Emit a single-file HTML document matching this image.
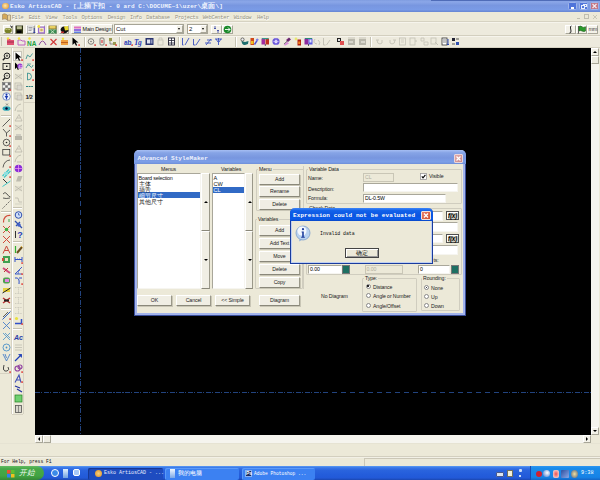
<!DOCTYPE html>
<html><head><meta charset="utf-8">
<style>
*{margin:0;padding:0;box-sizing:border-box}
html,body{width:600px;height:480px;overflow:hidden;background:#ECE9D8;font-family:"Liberation Sans",sans-serif;font-size:6px;color:#000}
.a{position:absolute}
svg.a{overflow:visible}
.mono{font-family:"Liberation Mono",monospace}
.tt{white-space:nowrap;line-height:1}
.btn{position:absolute;background:#F0EEE4;border-top:1px solid #fff;border-left:1px solid #fff;border-right:1px solid #9A9889;border-bottom:1px solid #8A887A;box-shadow:1px 1px 0 #C9C6B6;text-align:center;white-space:nowrap;line-height:8px;font-size:5.2px;letter-spacing:-0.1px;color:#222}
.fld{position:absolute;background:#fff;border-top:1px solid #A9A79A;border-left:1px solid #A9A79A;border-right:1px solid #F6F5F0;border-bottom:1px solid #F6F5F0;white-space:nowrap;font-size:5.2px;line-height:7px;padding-left:1px;letter-spacing:-0.1px}
.grp{position:absolute;border:1px solid #D0CDBF;border-radius:1px}
.glab{position:absolute;background:#ECE9D8;padding:0 1px;font-size:5.2px;letter-spacing:-0.1px;line-height:6px;white-space:nowrap;color:#222}
.lbl{position:absolute;font-size:5.2px;letter-spacing:-0.1px;line-height:6px;white-space:nowrap;color:#222}
.tb{position:absolute;background:#F3F1E8;border-top:1px solid #fff;border-left:1px solid #fff;border-right:1px solid #A8A698;border-bottom:1px solid #A8A698}
.sep{position:absolute;width:2px;border-left:1px solid #C5C2B2;border-right:1px solid #fff}
.hsep{position:absolute;height:2px;border-top:1px solid #C5C2B2;border-bottom:1px solid #fff}
.menu{position:absolute;top:15.5px;font-family:"Liberation Mono",monospace;font-size:5.4px;line-height:5px;letter-spacing:-0.3px;color:#959383;white-space:nowrap;text-shadow:0.5px 0.5px 0 #fff}
</style></head><body>

<div class="a" style="left:0;top:0;width:600px;height:12px;background:linear-gradient(#7F9CE0 0,#8BA7E8 15%,#7896E0 45%,#7A9BE6 80%,#6585D2 100%)"></div>
<div class="a" style="left:2px;top:2.5px;width:6.5px;height:6.5px;border-radius:45%;background:radial-gradient(circle at 45% 45%,#FFE8B0,#E8A848 70%,#C88830)"></div>
<div class="a tt mono" style="left:10px;top:3.7px;font-size:6px;font-weight:bold;color:#F0F4FE;letter-spacing:0.1px">Esko ArtiosCAD - [<span style="font-size:6.6px">上插下扣</span> - 0 ard C:\DOCUME~1\uzer\<span style="font-size:6.6px">桌面</span>\]</div>
<div class="a" style="left:568px;top:2px;width:9px;height:8px;border-radius:1.5px;background:#4F74DA;border:1px solid #9EB4EA"></div>
<div class="a" style="left:579px;top:2px;width:9px;height:8px;border-radius:1.5px;background:#5276DB;border:1px solid #9EB4EA"></div>
<div class="a" style="left:590px;top:2px;width:9px;height:8px;border-radius:1.5px;background:#C27584;border:1px solid #9EB4EA"></div>
<div class="a" style="left:570.5px;top:7px;width:3px;height:1.5px;background:#fff"></div>
<div class="a" style="left:582.5px;top:3.5px;width:4px;height:3px;border:1px solid #E8EEFC"></div><div class="a" style="left:581px;top:5px;width:4px;height:3.5px;border:1px solid #E8EEFC;background:#5276DB"></div>
<svg class="a" style="left:590px;top:2px" width="9" height="8"><path d="M2.5 2L6.5 6M6.5 2L2.5 6" stroke="#F4E8EC" stroke-width="1.2"/></svg>
<div class="a" style="left:431px;top:0;width:169px;height:1px;background:#4F6CB8"></div>
<div class="a" style="left:0;top:12px;width:600px;height:10px;background:#ECE9D8"></div>
<div class="a" style="left:0;top:21px;width:600px;height:1px;background:#D6D2C2"></div>
<svg class="a" style="left:2px;top:13px" width="10" height="9" viewBox="0 0 10 9"><path d="M0.5 1.5 Q2 0.2 3.5 1 L5.5 2 L5.5 7 L3.5 6 Q2 5.5 0.5 6.5 Z" fill="#D4A858" stroke="#8A7050" stroke-width=".5"/><path d="M5.5 2.5 Q7 1.5 8.5 2 L8.5 7.5 Q7 7 5.5 7.5 Z" fill="#ECD39C" stroke="#7A6A50" stroke-width=".5"/></svg>
<div class="menu" style="left:11.7px">File</div>
<div class="menu" style="left:28.7px">Edit</div>
<div class="menu" style="left:45.5px">View</div>
<div class="menu" style="left:62.5px">Tools</div>
<div class="menu" style="left:81.6px">Options</div>
<div class="menu" style="left:107.7px">Design</div>
<div class="menu" style="left:130px">Info</div>
<div class="menu" style="left:146.3px">Database</div>
<div class="menu" style="left:175px">Projects</div>
<div class="menu" style="left:202.7px">WebCenter</div>
<div class="menu" style="left:233.7px">Window</div>
<div class="menu" style="left:257px">Help</div>
<div class="a" style="left:577px;top:18px;width:3px;height:1px;background:#C0BEB0"></div>
<div class="a" style="left:584px;top:14px;width:5px;height:5px;border:1px solid #C0BEB0"></div>
<svg class="a" style="left:592px;top:14px" width="6" height="6"><path d="M1 1L5 5M5 1L1 5" stroke="#C0BEB0" stroke-width=".8"/></svg>
<div class="a" style="left:0;top:22px;width:600px;height:13px;background:#EDEADD"></div>
<div class="a" style="left:0;top:22px;width:600px;height:1px;background:#F6F4EC"></div>
<div class="a" style="left:0;top:34.5px;width:600px;height:1px;background:#D3CFBF"></div>
<div class="a" style="left:0;top:35.5px;width:600px;height:1px;background:#F6F4EC"></div>
<div class="a" style="left:0;top:36.5px;width:600px;height:10.5px;background:#EDEADD"></div>
<div class="a" style="left:0;top:47px;width:600px;height:1px;background:#D6D2C2"></div>
<div class="tb" style="left:3px;top:24.5px;width:10px;height:9px"></div>
<svg class="a" style="left:4px;top:25px" width="9" height="9" viewBox="0 0 9 9"><path d="M0.5 5 Q1 2.5 3.5 3 L7.5 3.5 Q8.5 7 6 8 L2 8 Q0.5 7.5 0.5 5z" fill="#7A8228"/><path d="M1.5 4.5 Q3 3.5 6 4.5" stroke="#C8C880" stroke-width="1" fill="none"/><path d="M6 0.8 L8.3 1.8 L7 3" stroke="#222" stroke-width=".8" fill="none"/></svg>
<div class="tb" style="left:14px;top:24.5px;width:9px;height:9px"></div>
<svg class="a" style="left:15px;top:25px" width="9" height="9" viewBox="0 0 9 9"><rect x="0.5" y="0.5" width="7.5" height="8" fill="#2E3212"/><rect x="1.8" y="1.2" width="5" height="3" fill="#B8BC90"/><rect x="2" y="5.5" width="4.5" height="2.5" fill="#000"/></svg>
<div class="tb" style="left:25.5px;top:24.5px;width:9px;height:9px"></div>
<svg class="a" style="left:26.5px;top:25px" width="9" height="9" viewBox="0 0 9 9"><rect x="0.5" y="1" width="6" height="7" fill="#F4F4F4" stroke="#9A9A9A" stroke-width=".5"/><path d="M1.5 2.5h4M1.5 4h4M1.5 5.5h3" stroke="#707070" stroke-width=".6"/><path d="M7.3 3v5M6.3 7l1 1 1-1" stroke="#2030A0" stroke-width=".8" fill="none"/></svg>
<div class="tb" style="left:36px;top:24.5px;width:9px;height:9px"></div>
<svg class="a" style="left:37px;top:25px" width="9" height="9" viewBox="0 0 9 9"><rect x="1" y="1.5" width="7" height="7" fill="#9868D0"/><rect x="2.2" y="2.7" width="4.6" height="4.6" fill="#F4ECC8"/><circle cx="4.5" cy="5" r="1.3" fill="#D0B060"/><circle cx="1.8" cy="1.5" r="1.4" fill="#F0E040"/></svg>
<div class="tb" style="left:47px;top:24.5px;width:10px;height:9px"></div>
<svg class="a" style="left:48px;top:25px" width="9" height="9" viewBox="0 0 9 9"><rect x="0.5" y="0.5" width="8" height="4" fill="#8A7A30"/><rect x="1.5" y="1" width="6" height="2.5" fill="#E8D060"/><rect x="0.5" y="4.5" width="8" height="4" fill="#3A8A50"/><path d="M2.5 5L6.5 8.5M6.5 5L2.5 8.5" stroke="#D8F0D0" stroke-width=".8"/></svg>
<div class="tb" style="left:59px;top:24.5px;width:10px;height:9px"></div>
<svg class="a" style="left:60px;top:25px" width="9" height="9" viewBox="0 0 9 9"><path d="M0.5 5 Q1 1.5 4 1.5 L8 2.5 L8.5 6 Q6 9 3 8.5 Z" fill="#111"/><path d="M4 1.5 L8 1 L8.5 5 L5 5.5 Z" fill="#E8D830"/><rect x="1" y="6.5" width="3" height="1.5" fill="#C03030"/></svg>
<div class="tb" style="left:71px;top:24px;width:42px;height:10px"></div>
<svg class="a" style="left:72.5px;top:25px" width="9" height="9" viewBox="0 0 9 9"><rect x="1" y="1.5" width="7" height="2" fill="#E070C0"/><rect x="1" y="4" width="7" height="2" fill="#9070E0"/><rect x="1" y="6.5" width="7" height="1.5" fill="#6080E0"/></svg>
<div class="a tt" style="left:82.5px;top:26.5px;font-size:5.4px;letter-spacing:-0.1px;color:#111">Main Design</div>
<div class="a" style="left:114px;top:24px;width:70px;height:9.5px;background:#fff;border:1px solid #A6A496"></div>
<div class="a tt" style="left:116px;top:26px;font-size:6px;color:#111">Cut</div>
<div class="tb" style="left:176px;top:25px;width:7px;height:7.5px"></div>
<div class="a" style="left:178px;top:28px;border-left:1.5px solid transparent;border-right:1.5px solid transparent;border-top:2px solid #000"></div>
<div class="a" style="left:187px;top:24px;width:21px;height:9.5px;background:#fff;border:1px solid #A6A496"></div>
<div class="a tt" style="left:189px;top:26px;font-size:6px;color:#111">2</div>
<div class="tb" style="left:200px;top:25px;width:7px;height:7.5px"></div>
<div class="a" style="left:202px;top:28px;border-left:1.5px solid transparent;border-right:1.5px solid transparent;border-top:2px solid #000"></div>
<div class="tb" style="left:211px;top:24.5px;width:11px;height:9px"></div>
<svg class="a" style="left:212px;top:25px" width="9" height="9" viewBox="0 0 9 9"><path d="M3 1v3M2 3l1 1 1-1M6 8V5M5 6l1-1 1 1" stroke="#3040A0" stroke-width=".8" fill="none"/></svg>
<div class="tb" style="left:222px;top:24.5px;width:11px;height:9px"></div>
<svg class="a" style="left:223px;top:25px" width="9" height="9" viewBox="0 0 9 9"><circle cx="4.5" cy="4.5" r="3.8" fill="#1A8A2A"/><path d="M2 4.5h5M5 2.5l2 2-2 2" stroke="#fff" stroke-width=".9" fill="none"/></svg>
<div class="tb" style="left:565px;top:24.5px;width:11px;height:9px"></div>
<svg class="a" style="left:566px;top:25px" width="9" height="9" viewBox="0 0 9 9"><path d="M5.5 1 Q4 1 4.5 3 L5 6 Q5.2 8 3.5 8" stroke="#111" stroke-width=".9" fill="none"/></svg>
<div class="tb" style="left:576px;top:24.5px;width:11px;height:9px"></div>
<svg class="a" style="left:577px;top:25px" width="9" height="9" viewBox="0 0 9 9"><path d="M1.5 1v7.5" stroke="#222" stroke-width=".7"/><path d="M2 1.5 Q4 0.5 5 1.8 T8.5 1.8 V6 Q7 7 5 6 T2 6z" fill="#2A9A2A" stroke="#0A4A0A" stroke-width=".5"/></svg>
<div class="tb" style="left:587px;top:24.5px;width:11px;height:9px"></div>
<div class="a tt" style="left:588.5px;top:26.5px;font-size:5.5px;color:#444;letter-spacing:-0.3px">mm</div>
<div class="a" style="left:1px;top:37px;width:1px;height:9px;background:#C5C2B2"></div>
<svg class="a" style="left:6px;top:37px" width="9" height="9" viewBox="0 0 9 9"><path d="M1 2h3l1 1h3v5H1z" fill="#E05070"/><path d="M1 5h7" stroke="#A03050" stroke-width="1"/><circle cx="2" cy="1.5" r="1.2" fill="#F0E040"/></svg>
<svg class="a" style="left:17px;top:37px" width="9" height="9" viewBox="0 0 9 9"><path d="M1 3h3l1 1h3v4H1z" fill="none" stroke="#C060C0" stroke-width="1"/><circle cx="2" cy="1.5" r="1.2" fill="#F0E040"/></svg>
<svg class="a" style="left:27px;top:37px" width="9" height="9" viewBox="0 0 9 9"><text x="0" y="8.5" font-size="6.5" font-weight="bold" fill="#20A040" font-family="Liberation Sans">NA</text><circle cx="2.5" cy="1.5" r="1.2" fill="#F0E040"/></svg>
<svg class="a" style="left:38px;top:37px" width="9" height="9" viewBox="0 0 9 9"><path d="M1 8 Q4.5 0 8 8" stroke="#9050A0" stroke-width="1" fill="none"/><circle cx="4.5" cy="2" r="1.2" fill="#F0E040"/></svg>
<svg class="a" style="left:49px;top:37px" width="9" height="9" viewBox="0 0 9 9"><path d="M1.5 2L7.5 8M7.5 2L1.5 8" stroke="#D03A3A" stroke-width="1.2"/></svg>
<svg class="a" style="left:60px;top:37px" width="9" height="9" viewBox="0 0 9 9"><rect x="1" y="3" width="7" height="5" fill="#F0A040"/><rect x="1" y="5" width="7" height="1" fill="#C06020"/><circle cx="3" cy="1.8" r="1.2" fill="#F0E040"/></svg>
<svg class="a" style="left:70.5px;top:37px" width="9" height="9" viewBox="0 0 9 9"><path d="M1.5 0.5 L1.5 8 L3.5 6 L5 8.8 L6.2 8.2 L4.8 5.5 L7.5 5.5 Z" fill="#000"/><rect x="7.3" y="7.3" width="1.6" height="1.6" fill="#E0403A"/></svg>
<svg class="a" style="left:86.5px;top:37px" width="9" height="9" viewBox="0 0 9 9"><circle cx="4" cy="4.5" r="2.8" fill="none" stroke="#555" stroke-width=".7"/><circle cx="4" cy="4.5" r=".7" fill="#555"/><rect x="7.3" y="7.3" width="1.6" height="1.6" fill="#E0403A"/></svg>
<svg class="a" style="left:97.5px;top:37px" width="9" height="9" viewBox="0 0 9 9"><rect x="2" y="1" width="4" height="7" rx="1" fill="none" stroke="#666" stroke-width=".8"/><rect x="3" y="3" width="2" height="3" fill="#E08080"/><rect x="7.3" y="7.3" width="1.6" height="1.6" fill="#E0403A"/></svg>
<svg class="a" style="left:108px;top:37px" width="9" height="9" viewBox="0 0 9 9"><path d="M1 1h3v3H1zM5 5h3v3H5z" fill="#9A9A50"/><path d="M2 4v3h3" stroke="#666" stroke-width=".7" fill="none"/><rect x="7.3" y="7.3" width="1.6" height="1.6" fill="#E0403A"/></svg>
<svg class="a" style="left:124px;top:37px" width="9" height="9" viewBox="0 0 9 9"><text x="0" y="7.5" font-size="6.5" font-weight="bold" fill="#2A40B8" font-family="Liberation Sans">ab</text><rect x="7.3" y="7.3" width="1.6" height="1.6" fill="#E0403A"/></svg>
<svg class="a" style="left:134px;top:37px" width="9" height="9" viewBox="0 0 9 9"><text x="0" y="7.5" font-size="7.5" font-weight="bold" font-style="italic" fill="#2A40B8" font-family="Liberation Serif" letter-spacing="-0.5">Tg</text></svg>
<svg class="a" style="left:145px;top:37px" width="9" height="9" viewBox="0 0 9 9"><rect x="0.5" y="1" width="8" height="7" fill="#2A3470"/><rect x="2" y="2.5" width="3" height="4" fill="#E0E4F0"/><rect x="5.5" y="2.5" width="2" height="4" fill="#9098C0"/></svg>
<svg class="a" style="left:156px;top:37px" width="9" height="9" viewBox="0 0 9 9"><rect x="2" y="3" width="5" height="5" fill="none" stroke="#C4C2B6" stroke-width=".8"/><path d="M3 3V1h3v2" stroke="#C4C2B6" stroke-width=".7" fill="none"/></svg>
<svg class="a" style="left:167px;top:37px" width="9" height="9" viewBox="0 0 9 9"><rect x="1.5" y="1" width="6" height="7" fill="#fff" stroke="#223" stroke-width=".9"/><path d="M1.5 3.5h6M1.5 6h6M4.5 1v7" stroke="#223" stroke-width=".8"/></svg>
<svg class="a" style="left:181px;top:37px" width="9" height="9" viewBox="0 0 9 9"><path d="M1.5 1v7h1M4 8L8 1" stroke="#3A50C0" stroke-width=".9" fill="none"/></svg>
<svg class="a" style="left:192px;top:37px" width="9" height="9" viewBox="0 0 9 9"><path d="M1.5 2v6h2M4 8L8 2" stroke="#3A50C0" stroke-width=".9" fill="none"/></svg>
<svg class="a" style="left:204px;top:37px" width="9" height="9" viewBox="0 0 9 9"><path d="M1 6h6M3 3h5M2 8l5-6" stroke="#3A50C0" stroke-width=".9" fill="none"/></svg>
<svg class="a" style="left:214px;top:37px" width="9" height="9" viewBox="0 0 9 9"><path d="M1 2h7M4.5 1v7M2 2l2 3M7 2l-2 3" stroke="#3A50C0" stroke-width=".9" fill="none"/></svg>
<svg class="a" style="left:240px;top:37px" width="9" height="9" viewBox="0 0 9 9"><path d="M1.5 4 Q2 8.5 5 8 L8 7 L8.5 4 L5 5 Z" fill="#1D6E6E"/><circle cx="2.5" cy="2.5" r="1.6" fill="#F0F0F0" stroke="#222" stroke-width=".6"/></svg>
<svg class="a" style="left:250px;top:37px" width="9" height="9" viewBox="0 0 9 9"><rect x="0.5" y="1" width="3.5" height="7" fill="#D04818"/><rect x="1" y="4" width="2.5" height="3" fill="#F0C020"/><path d="M4.5 7.5 L8 2" stroke="#5050D0" stroke-width="1.4"/><circle cx="7" cy="3" r="1.2" fill="#8080E8"/></svg>
<svg class="a" style="left:261px;top:37px" width="9" height="9" viewBox="0 0 9 9"><rect x="0.5" y="1.5" width="3.5" height="6" fill="#A02CA0"/><rect x="4.5" y="1.5" width="3.5" height="6" fill="#C03020"/><rect x="1" y="1" width="6.5" height="1.2" fill="#3A9A8A"/><path d="M4.3 7v2" stroke="#334" stroke-width=".8"/></svg>
<svg class="a" style="left:272px;top:37px" width="9" height="9" viewBox="0 0 9 9"><circle cx="4" cy="4.5" r="3.6" fill="#6A58D8"/><circle cx="4" cy="4.5" r="1.6" fill="#F4F0FF"/><path d="M0.5 4.5h7M4 1v7" stroke="#C8B8F8" stroke-width=".5"/></svg>
<svg class="a" style="left:283px;top:37px" width="9" height="9" viewBox="0 0 9 9"><path d="M0.5 8 L4 4.5 L6 6.5 L2.5 8.5z" fill="#D890D8"/><path d="M3 3 L6 0.5 L8 2.5 L5 5z" fill="#7A2880"/><path d="M1 7 L7 1.5" stroke="#333" stroke-width=".6"/></svg>
<svg class="a" style="left:293.5px;top:37px" width="9" height="9" viewBox="0 0 9 9"><circle cx="2" cy="2" r="1.4" fill="#E8E870"/><rect x="3.5" y="2.5" width="3.5" height="6" fill="#B02010"/><rect x="4.2" y="4.5" width="2" height="2.5" fill="#F08020"/></svg>
<svg class="a" style="left:304px;top:37px" width="9" height="9" viewBox="0 0 9 9"><rect x="0.5" y="1.5" width="4" height="6" fill="#8A2AA0"/><rect x="4.5" y="1.5" width="4" height="6" fill="#5A5AE0"/><rect x="5.5" y="2.5" width="2" height="3" fill="#E0E0FF"/><rect x="1" y="1" width="7" height="1" fill="#2A8A7A"/><path d="M4.5 7v2" stroke="#334" stroke-width=".8"/></svg>
<svg class="a" style="left:313px;top:37px" width="9" height="9" viewBox="0 0 9 9"><path d="M2 2 Q-1 6 4 7 M5 3 Q8 5 6 8" stroke="#BFBDB1" stroke-width=".9" fill="none"/></svg>
<svg class="a" style="left:322px;top:37px" width="9" height="9" viewBox="0 0 9 9"><path d="M1.5 1v7h2M4.5 8L8 3" stroke="#BFBDB1" stroke-width=".9" fill="none"/></svg>
<svg class="a" style="left:336px;top:37px" width="9" height="9" viewBox="0 0 9 9"><rect x="1" y="1" width="4" height="4" fill="#222"/><rect x="4" y="4" width="4" height="4" fill="#E05050"/><rect x="2" y="2" width="2" height="2" fill="#ddd"/></svg>
<svg class="a" style="left:347px;top:37px" width="9" height="9" viewBox="0 0 9 9"><rect x="1" y="2" width="7" height="6" fill="#B8B6AA"/><path d="M1 1h7" stroke="#C8C6BA" stroke-width="1"/><rect x="2" y="4" width="4" height="2" fill="#D8D6CC"/></svg>
<svg class="a" style="left:358px;top:37px" width="9" height="9" viewBox="0 0 9 9"><rect x="1" y="2" width="7" height="6" fill="#B8B6AA"/><path d="M1 1h7" stroke="#C8C6BA" stroke-width="1"/><rect x="3" y="4" width="4" height="2" fill="#D8D6CC"/></svg>
<svg class="a" style="left:375px;top:37px" width="9" height="9" viewBox="0 0 9 9"><path d="M2 3 Q2 7 5 7 Q8 7 7 3 M1 3h3" stroke="#C4C2B6" stroke-width=".9" fill="none"/></svg>
<svg class="a" style="left:388px;top:37px" width="9" height="9" viewBox="0 0 9 9"><path d="M7 3 Q7 7 4 7 Q1 7 2 3 M5 3h3" stroke="#C4C2B6" stroke-width=".9" fill="none"/></svg>
<svg class="a" style="left:398px;top:37px" width="9" height="9" viewBox="0 0 9 9"><rect x="1.5" y="1" width="6" height="7" fill="none" stroke="#C4C2B6" stroke-width=".8"/><path d="M3 3h3M3 5h3" stroke="#C4C2B6" stroke-width=".7"/></svg>
<svg class="a" style="left:409px;top:37px" width="9" height="9" viewBox="0 0 9 9"><rect x="1" y="1" width="5" height="7" fill="none" stroke="#C4C2B6" stroke-width=".8"/><path d="M6 4h2" stroke="#C4C2B6" stroke-width="1"/></svg>
<svg class="a" style="left:420px;top:37px" width="9" height="9" viewBox="0 0 9 9"><path d="M1 1h3v3H1zM4 5h4v3H4z" fill="none" stroke="#C4C2B6" stroke-width=".8"/></svg>
<svg class="a" style="left:430px;top:37px" width="9" height="9" viewBox="0 0 9 9"><rect x="1" y="1" width="5" height="6" fill="none" stroke="#C4C2B6" stroke-width=".8"/><path d="M5 5l3 3" stroke="#C4C2B6" stroke-width="1"/></svg>
<svg class="a" style="left:441px;top:37px" width="9" height="9" viewBox="0 0 9 9"><rect x="1" y="1" width="5" height="7" fill="#fff" stroke="#333" stroke-width=".8"/><path d="M2 3h3M2 5h3" stroke="#333" stroke-width=".6"/><path d="M7 2v6M6 7l1 1 1-1" stroke="#2040B0" stroke-width=".9" fill="none"/></svg>
<svg class="a" style="left:451px;top:37px" width="9" height="9" viewBox="0 0 9 9"><path d="M1 1h3v3H1z" fill="#223"/><path d="M5 5h3v3H5z" fill="#3050B0"/><path d="M5 2l3 0M1 7h3" stroke="#333" stroke-width=".8"/></svg>
<div class="sep" style="left:84px;top:36.5px;height:10px"></div>
<div class="sep" style="left:118.5px;top:36.5px;height:10px"></div>
<div class="sep" style="left:177.5px;top:36.5px;height:10px"></div>
<div class="sep" style="left:234.5px;top:36.5px;height:10px"></div>
<div class="sep" style="left:370px;top:36.5px;height:10px"></div>
<svg class="a" style="left:1.5px;top:51.5px" width="9" height="9" viewBox="0 0 9 9"><circle cx="5" cy="3.8" r="2.8" fill="none" stroke="#222" stroke-width="1"/><path d="M3 6 L0.8 8.2" stroke="#222" stroke-width="1.4"/><path d="M3.8 3.8h2.4M5 2.6v2.4" stroke="#222" stroke-width=".7"/></svg>
<svg class="a" style="left:1.5px;top:62.0px" width="9" height="9" viewBox="0 0 9 9"><rect x="1" y="1.5" width="7" height="6" fill="none" stroke="#222" stroke-width=".9"/><rect x="4" y="3.5" width="1.5" height="1.5" fill="#222"/></svg>
<svg class="a" style="left:1.5px;top:72.0px" width="9" height="9" viewBox="0 0 9 9"><circle cx="5" cy="3.8" r="2.8" fill="none" stroke="#222" stroke-width="1"/><path d="M3 6 L0.8 8.2" stroke="#222" stroke-width="1.4"/><path d="M3.8 3.8h2.4" stroke="#222" stroke-width=".7"/></svg>
<svg class="a" style="left:1.5px;top:82.0px" width="9" height="9" viewBox="0 0 9 9"><rect x="0.5" y="0.5" width="8" height="8" fill="#F4F4F0" stroke="#666" stroke-width=".5"/><path d="M0.5 0.5h2.7v2.7h-2.7zM5.8 0.5h2.7v2.7h-2.7zM3.2 3.2h2.6v2.6h-2.6zM0.5 5.8h2.7v2.7h-2.7zM5.8 5.8h2.7v2.7h-2.7z" fill="#707070"/><rect x="7.3" y="7.3" width="1.6" height="1.6" fill="#E0403A"/></svg>
<svg class="a" style="left:1.5px;top:92.0px" width="9" height="9" viewBox="0 0 9 9"><circle cx="4.5" cy="4.5" r="3.8" fill="#F0F4FC" stroke="#5070B8" stroke-width=".7"/><circle cx="4.5" cy="2.6" r="1" fill="#1838B0"/><path d="M4.5 3.5v4M3 5l1.5-1 1.5 1" stroke="#1838B0" stroke-width="1.1" fill="none"/></svg>
<svg class="a" style="left:1.5px;top:102.5px" width="9" height="9" viewBox="0 0 9 9"><ellipse cx="4.5" cy="5.5" rx="4" ry="2.3" fill="#30A8B8"/><circle cx="4.5" cy="5.5" r="1.2" fill="#003"/><path d="M4 0.5l2 2M6 0.5l-2 2" stroke="#555" stroke-width=".6"/></svg>
<svg class="a" style="left:1.5px;top:118.0px" width="9" height="9" viewBox="0 0 9 9"><path d="M0.5 8.5 L8 1" stroke="#222" stroke-width=".7"/><rect x="7.3" y="7.3" width="1.6" height="1.6" fill="#E0403A"/></svg>
<svg class="a" style="left:1.5px;top:128.0px" width="9" height="9" viewBox="0 0 9 9"><path d="M1 1 L4.5 5 L8 2 M4.5 5 L4.5 8.5" stroke="#222" stroke-width=".7" fill="none"/><rect x="7.3" y="7.3" width="1.6" height="1.6" fill="#E0403A"/></svg>
<svg class="a" style="left:1.5px;top:138.0px" width="9" height="9" viewBox="0 0 9 9"><circle cx="4.5" cy="4.5" r="3.3" fill="none" stroke="#222" stroke-width=".7"/><circle cx="4.5" cy="4.5" r=".8" fill="#222"/><rect x="7.3" y="7.3" width="1.6" height="1.6" fill="#E0403A"/></svg>
<svg class="a" style="left:1.5px;top:148.0px" width="9" height="9" viewBox="0 0 9 9"><rect x="0.8" y="1.5" width="7" height="5.5" fill="none" stroke="#222" stroke-width=".7"/><rect x="7.3" y="7.3" width="1.6" height="1.6" fill="#E0403A"/></svg>
<svg class="a" style="left:1.5px;top:158.5px" width="9" height="9" viewBox="0 0 9 9"><path d="M1 8.5 Q2 1.5 8 1" stroke="#222" stroke-width=".7" fill="none"/><rect x="7.3" y="7.3" width="1.6" height="1.6" fill="#E0403A"/></svg>
<svg class="a" style="left:1.5px;top:168.5px" width="9" height="9" viewBox="0 0 9 9"><path d="M0.5 7 L7 0.5 M2 8.5 L8.5 2" stroke="#40C8C8" stroke-width="1.2"/><rect x="2" y="3" width="4" height="3" fill="#90E0E0"/><rect x="7.3" y="7.3" width="1.6" height="1.6" fill="#E0403A"/></svg>
<svg class="a" style="left:1.5px;top:178.0px" width="9" height="9" viewBox="0 0 9 9"><path d="M0.5 8.5 L8.5 3" stroke="#40C8C8" stroke-width="1"/><path d="M1 1 L5 5" stroke="#222" stroke-width=".9"/></svg>
<svg class="a" style="left:1.5px;top:190.5px" width="9" height="9" viewBox="0 0 9 9"><path d="M1 3 Q3 0 5 3 T8.5 6 M1 7 Q4 8 8 7" stroke="#222" stroke-width=".7" fill="none"/></svg>
<svg class="a" style="left:1.5px;top:199.5px" width="9" height="9" viewBox="0 0 9 9"><path d="M0.5 8.5 L8.5 0.5" stroke="#222" stroke-width=".65" stroke-dasharray="1.5 1"/></svg>
<svg class="a" style="left:1.5px;top:214.0px" width="9" height="9" viewBox="0 0 9 9"><path d="M1.5 8.5 Q1.5 1 8.5 1.5" stroke="#D04A3A" stroke-width="1.2" fill="none"/><path d="M7 5v3" stroke="#30A040" stroke-width=".9"/></svg>
<svg class="a" style="left:1.5px;top:224.5px" width="9" height="9" viewBox="0 0 9 9"><path d="M1 1 L8 8 M8 1 L1 8" stroke="#D04A3A" stroke-width="1"/><circle cx="4.5" cy="4.5" r="1.8" fill="#40B040"/></svg>
<svg class="a" style="left:1.5px;top:234.5px" width="9" height="9" viewBox="0 0 9 9"><path d="M1 1 L8 8 M8 1 L1 8" stroke="#D04A3A" stroke-width="1"/></svg>
<svg class="a" style="left:1.5px;top:244.5px" width="9" height="9" viewBox="0 0 9 9"><path d="M1 8.5 L4.5 1 L8 8.5 M2.5 5.5h4" stroke="#C8483A" stroke-width="1" fill="none"/></svg>
<svg class="a" style="left:1.5px;top:255.0px" width="9" height="9" viewBox="0 0 9 9"><rect x="1" y="1" width="7" height="7" fill="#40A050"/><rect x="3" y="3" width="3" height="3" fill="#F0E0C0"/><rect x="0" y="3" width="2" height="3" fill="#D04A3A"/></svg>
<svg class="a" style="left:1.5px;top:266.0px" width="9" height="9" viewBox="0 0 9 9"><path d="M1 2 L8 7" stroke="#D04A7A" stroke-width="2"/><path d="M2 6 L6 2" stroke="#C03030" stroke-width="1"/></svg>
<svg class="a" style="left:1.5px;top:276.0px" width="9" height="9" viewBox="0 0 9 9"><rect x="1" y="1.5" width="7" height="6" rx="2" fill="#50A050"/><rect x="3" y="3" width="4" height="3" fill="#E080E0"/></svg>
<svg class="a" style="left:1.5px;top:286.0px" width="9" height="9" viewBox="0 0 9 9"><rect x="1" y="2" width="7" height="4" fill="#E8D040"/><path d="M0.5 7 L8.5 2" stroke="#222" stroke-width="1"/></svg>
<svg class="a" style="left:1.5px;top:296.0px" width="9" height="9" viewBox="0 0 9 9"><path d="M1 2 L8 7 M8 2 L1 7" stroke="#C03030" stroke-width="1.5"/><rect x="2" y="3.5" width="5" height="2" fill="#222"/></svg>
<svg class="a" style="left:1.5px;top:311.0px" width="9" height="9" viewBox="0 0 9 9"><path d="M0.5 8.5 L8.5 0.5" stroke="#3060C0" stroke-width="1"/><path d="M1 6 L6 1" stroke="#222" stroke-width=".7"/><rect x="7.3" y="7.3" width="1.6" height="1.6" fill="#E0403A"/></svg>
<svg class="a" style="left:1.5px;top:321.0px" width="9" height="9" viewBox="0 0 9 9"><path d="M1 1 L8 8 M8 1 L1 8" stroke="#4A80C8" stroke-width=".9"/></svg>
<svg class="a" style="left:1.5px;top:332.0px" width="9" height="9" viewBox="0 0 9 9"><path d="M1 1 L8 8 M8 1 L1 8 M3 1 L8 6" stroke="#4A90C8" stroke-width=".8"/></svg>
<svg class="a" style="left:1.5px;top:342.5px" width="9" height="9" viewBox="0 0 9 9"><circle cx="4.5" cy="4.5" r="3.5" fill="none" stroke="#4A90C8" stroke-width=".9"/><circle cx="4.5" cy="4.5" r=".9" fill="#4A90C8"/></svg>
<svg class="a" style="left:1.5px;top:353.0px" width="9" height="9" viewBox="0 0 9 9"><path d="M1 1 L4.5 8 L8 1 M3 1 L4.5 5" stroke="#4A80C8" stroke-width=".9" fill="none"/></svg>
<svg class="a" style="left:1.5px;top:363.5px" width="9" height="9" viewBox="0 0 9 9"><path d="M2 1 Q0 8 5 7 Q8 6 6 3" stroke="#333" stroke-width=".9" fill="none"/><rect x="7.3" y="7.3" width="1.6" height="1.6" fill="#E0403A"/></svg>
<div class="hsep" style="left:1px;top:114.5px;width:10px"></div>
<div class="hsep" style="left:1px;top:210.5px;width:10px"></div>
<div class="hsep" style="left:1px;top:307.5px;width:10px"></div>
<div class="a" style="left:0;top:373px;width:11px;height:1px;background:#D6D2C2"></div>
<div class="a" style="left:11px;top:48px;width:1px;height:366px;background:#D6D2C2"></div>
<div class="a" style="left:12px;top:48px;width:1px;height:366px;background:#fff"></div>
<div class="a" style="left:13px;top:51px;width:9px;height:10px;background:#FBFAF6;border:1px solid #C8C6BA"></div>
<svg class="a" style="left:13.5px;top:51.5px" width="9" height="9" viewBox="0 0 9 9"><path d="M1.5 0.5 L1.5 8 L3.5 6 L5 8.8 L6.2 8.2 L4.8 5.5 L7.5 5.5 Z" fill="#000"/><rect x="7.3" y="7.3" width="1.6" height="1.6" fill="#E0403A"/></svg>
<svg class="a" style="left:13.5px;top:62.0px" width="9" height="9" viewBox="0 0 9 9"><path d="M1 0.5 L1 7 L2.8 5.5 L3.8 8 L4.8 7.5 L3.8 5 L5.8 5 Z" fill="#000"/><circle cx="6" cy="4" r="2.6" fill="#9A3AD0"/><text x="4.2" y="6" font-size="4" fill="#fff" font-family="Liberation Sans">42</text></svg>
<svg class="a" style="left:13.5px;top:72.0px" width="9" height="9" viewBox="0 0 9 9"><path d="M1 2 L8 7 M1 7 L8 2" stroke="#B4B2A6" stroke-width=".8"/><rect x="2" y="3" width="5" height="3" fill="none" stroke="#C8C6BA" stroke-width=".6"/></svg>
<svg class="a" style="left:13.5px;top:82.0px" width="9" height="9" viewBox="0 0 9 9"><rect x="1" y="1" width="6" height="6" fill="none" stroke="#B4B2A6" stroke-width=".7"/><rect x="3" y="3" width="5" height="5" fill="#DAD8CE" stroke="#B4B2A6" stroke-width=".7"/></svg>
<svg class="a" style="left:13.5px;top:92.0px" width="9" height="9" viewBox="0 0 9 9"><rect x="1" y="1" width="6" height="6" fill="none" stroke="#B4B2A6" stroke-width=".7"/><rect x="3" y="3" width="5" height="5" fill="#DAD8CE" stroke="#B4B2A6" stroke-width=".7"/></svg>
<svg class="a" style="left:13.5px;top:102.5px" width="9" height="9" viewBox="0 0 9 9"><path d="M1 8 Q2 2 7 1 M3 8h5" stroke="#B4B2A6" stroke-width=".8" fill="none"/></svg>
<svg class="a" style="left:13.5px;top:113.0px" width="9" height="9" viewBox="0 0 9 9"><path d="M1 8 L5 1.5 L8 8 Z M3 5h3" stroke="#B4B2A6" stroke-width=".7" fill="none"/></svg>
<svg class="a" style="left:13.5px;top:122.5px" width="9" height="9" viewBox="0 0 9 9"><path d="M1 2 L8 7 M1 7 L8 2" stroke="#B4B2A6" stroke-width=".8"/><rect x="2" y="3" width="5" height="3" fill="none" stroke="#C8C6BA" stroke-width=".6"/></svg>
<svg class="a" style="left:13.5px;top:133.0px" width="9" height="9" viewBox="0 0 9 9"><rect x="1" y="3" width="7" height="4" fill="#B8B6AA"/><rect x="2" y="1" width="5" height="2" fill="#CFCDC2"/></svg>
<svg class="a" style="left:13.5px;top:143.5px" width="9" height="9" viewBox="0 0 9 9"><path d="M1 8 L5 1.5 L8 8 Z M3 5h3" stroke="#B4B2A6" stroke-width=".7" fill="none"/></svg>
<svg class="a" style="left:13.5px;top:153.5px" width="9" height="9" viewBox="0 0 9 9"><path d="M1 8 Q2 2 7 1 M3 8h5" stroke="#B4B2A6" stroke-width=".8" fill="none"/></svg>
<svg class="a" style="left:13.5px;top:164.0px" width="9" height="9" viewBox="0 0 9 9"><circle cx="4.5" cy="4.5" r="3.8" fill="#8A2BD8"/><path d="M1 4.5h7M4.5 1v7" stroke="#F0A0F0" stroke-width=".7"/></svg>
<svg class="a" style="left:13.5px;top:174.0px" width="9" height="9" viewBox="0 0 9 9"><path d="M2 7.5 L4 2 L8.5 2 L6.5 7.5 Z" fill="#BDBBAF"/></svg>
<svg class="a" style="left:13.5px;top:184.0px" width="9" height="9" viewBox="0 0 9 9"><path d="M1 2 L8 7 M1 7 L8 2" stroke="#B4B2A6" stroke-width=".8"/><rect x="2" y="3" width="5" height="3" fill="none" stroke="#C8C6BA" stroke-width=".6"/></svg>
<svg class="a" style="left:13.5px;top:195.5px" width="9" height="9" viewBox="0 0 9 9"><path d="M1 2 L4 2 L5 6 L8 6" stroke="#B4B2A6" stroke-width=".7" fill="none"/><path d="M1 8h7" stroke="#C8C6BA" stroke-width=".6"/></svg>
<svg class="a" style="left:13.5px;top:209.5px" width="9" height="9" viewBox="0 0 9 9"><circle cx="4.5" cy="5" r="3.3" fill="#D0E0F8" stroke="#3050B0" stroke-width="1"/><path d="M4.5 3v2h1.5" stroke="#3050B0" stroke-width=".7" fill="none"/></svg>
<svg class="a" style="left:13.5px;top:219.5px" width="9" height="9" viewBox="0 0 9 9"><path d="M1 1 L8 8 M2 6 L6 2" stroke="#3050B0" stroke-width="1.3"/><circle cx="5" cy="5" r="1.8" fill="#4060C8"/></svg>
<svg class="a" style="left:13.5px;top:229.5px" width="9" height="9" viewBox="0 0 9 9"><path d="M1.5 1v7" stroke="#333" stroke-width="1"/><text x="3.2" y="8" font-size="9" font-weight="bold" fill="#2A40B8" font-family="Liberation Sans">?</text></svg>
<svg class="a" style="left:13.5px;top:244.5px" width="9" height="9" viewBox="0 0 9 9"><path d="M1.5 1v7" stroke="#30B030" stroke-width="1.2"/><path d="M3 8 L8 2" stroke="#6A5020" stroke-width="2"/><path d="M7 1 L8.5 2.5" stroke="#E0B040" stroke-width="1"/></svg>
<svg class="a" style="left:13.5px;top:255.0px" width="9" height="9" viewBox="0 0 9 9"><path d="M1 2v5M8 2v5M1 4.5h7" stroke="#3050C8" stroke-width="1"/><path d="M2.5 4.5l1 -1M6.5 4.5l-1 -1" stroke="#3050C8" stroke-width=".7"/><rect x="7.3" y="7.3" width="1.6" height="1.6" fill="#E0403A"/></svg>
<svg class="a" style="left:13.5px;top:266.0px" width="9" height="9" viewBox="0 0 9 9"><path d="M1 8 L8 1 M1 8 L8 8" stroke="#3050C8" stroke-width=".9"/><path d="M4 8 Q4 5 6 4" stroke="#3050C8" stroke-width=".7" fill="none"/><rect x="7.3" y="7.3" width="1.6" height="1.6" fill="#E0403A"/></svg>
<svg class="a" style="left:13.5px;top:276.0px" width="9" height="9" viewBox="0 0 9 9"><path d="M1 2 Q6 1 5 8 M5 2 L8 2" stroke="#3050C8" stroke-width="1" fill="none"/><rect x="7.3" y="7.3" width="1.6" height="1.6" fill="#E0403A"/></svg>
<svg class="a" style="left:13.5px;top:286.0px" width="9" height="9" viewBox="0 0 9 9"><path d="M1 1.5h7M4.5 1.5v6M1 7.5h7" stroke="#C2C0B4" stroke-width=".7" stroke-dasharray="1 .6"/></svg>
<svg class="a" style="left:13.5px;top:296.0px" width="9" height="9" viewBox="0 0 9 9"><path d="M1 1.5h7M4.5 1.5v6M1 7.5h7" stroke="#C2C0B4" stroke-width=".7" stroke-dasharray="1 .6"/></svg>
<svg class="a" style="left:13.5px;top:306.0px" width="9" height="9" viewBox="0 0 9 9"><path d="M1 1.5h7M4.5 1.5v6M1 7.5h7" stroke="#C2C0B4" stroke-width=".7" stroke-dasharray="1 .6"/></svg>
<svg class="a" style="left:13.5px;top:316.0px" width="9" height="9" viewBox="0 0 9 9"><circle cx="2.5" cy="2.5" r="1.6" fill="#E8E040"/><path d="M1 7.5h7M7.5 3v5" stroke="#3050C8" stroke-width="1.5"/><rect x="7.3" y="7.3" width="1.6" height="1.6" fill="#E0403A"/></svg>
<svg class="a" style="left:13.5px;top:332.0px" width="9" height="9" viewBox="0 0 9 9"><text x="0" y="7.5" font-size="7" font-weight="bold" font-style="italic" fill="#2A40A8" font-family="Liberation Sans">Ac</text></svg>
<svg class="a" style="left:13.5px;top:342.5px" width="9" height="9" viewBox="0 0 9 9"><path d="M1 2h7M1 4.5h7M1 7h7" stroke="#C0BEB2" stroke-width=".8"/></svg>
<svg class="a" style="left:13.5px;top:353.0px" width="9" height="9" viewBox="0 0 9 9"><path d="M1 8 L7.5 1.5" stroke="#2040B8" stroke-width="1.2"/><path d="M4.5 1.5h3v3" fill="#2040B8" stroke="#2040B8" stroke-width=".8"/></svg>
<svg class="a" style="left:13.5px;top:363.5px" width="9" height="9" viewBox="0 0 9 9"><circle cx="3.5" cy="4.5" r="2.5" fill="none" stroke="#9040A0" stroke-width="1.2"/><circle cx="6" cy="3" r="2" fill="none" stroke="#9040A0" stroke-width="1.2"/><rect x="7.3" y="7.3" width="1.6" height="1.6" fill="#E0403A"/></svg>
<svg class="a" style="left:13.5px;top:373.5px" width="9" height="9" viewBox="0 0 9 9"><path d="M1 8.5 L5 1 L7 8.5 M2.5 6h4" stroke="#4050B8" stroke-width="1.1" fill="none"/><rect x="7.3" y="7.3" width="1.6" height="1.6" fill="#E0403A"/></svg>
<svg class="a" style="left:13.5px;top:383.5px" width="9" height="9" viewBox="0 0 9 9"><path d="M1 2 L6 4 M3 5 L8 8" stroke="#2030A0" stroke-width="1.3"/></svg>
<svg class="a" style="left:13.5px;top:393.5px" width="9" height="9" viewBox="0 0 9 9"><rect x="1" y="1" width="7" height="7" fill="#70D070" stroke="#208020" stroke-width=".7"/></svg>
<svg class="a" style="left:13.5px;top:404.0px" width="9" height="9" viewBox="0 0 9 9"><rect x="1.5" y="1.5" width="6" height="7" fill="#D8D6CC" stroke="#555" stroke-width=".8"/><path d="M4.5 1.5v7" stroke="#555" stroke-width=".6"/></svg>
<div class="hsep" style="left:13px;top:206.5px;width:9px"></div>
<div class="hsep" style="left:13px;top:241px;width:9px"></div>
<div class="hsep" style="left:13px;top:328px;width:9px"></div>
<div class="a" style="left:12px;top:413.5px;width:11px;height:1px;background:#D6D2C2"></div>
<div class="a" style="left:23px;top:48px;width:1px;height:366px;background:#D6D2C2"></div>
<svg class="a" style="left:24.5px;top:51.5px" width="9" height="9" viewBox="0 0 9 9"><path d="M1 7 L2.5 3 L5 5 L7.5 1.5" stroke="#2A8A8A" stroke-width=".8" fill="none"/><rect x="7.3" y="7.3" width="1.6" height="1.6" fill="#E0403A"/></svg>
<svg class="a" style="left:24.5px;top:62.0px" width="9" height="9" viewBox="0 0 9 9"><path d="M1 6 Q3 1 5 4 T8 3" stroke="#2A8A8A" stroke-width=".8" fill="none"/><path d="M2 2h4" stroke="#2A8A8A" stroke-width=".6"/><rect x="7.3" y="7.3" width="1.6" height="1.6" fill="#E0403A"/></svg>
<svg class="a" style="left:24.5px;top:72.0px" width="9" height="9" viewBox="0 0 9 9"><path d="M2.5 1v7 M2.5 1 Q6.5 1 6.5 4.5 Q6.5 8 2.5 8" stroke="#2A8A8A" stroke-width=".8" fill="none"/><rect x="7.3" y="7.3" width="1.6" height="1.6" fill="#E0403A"/></svg>
<svg class="a" style="left:24.5px;top:82.0px" width="9" height="9" viewBox="0 0 9 9"><path d="M1 4.5h7" stroke="#2A8080" stroke-width="1.2" stroke-dasharray="2 .6"/></svg>
<svg class="a" style="left:24.5px;top:92.0px" width="9" height="9" viewBox="0 0 9 9"><text x="0.5" y="7" font-size="6" font-weight="bold" fill="#222" font-family="Liberation Sans">1</text><path d="M3.5 6.5 L5 2.5" stroke="#222" stroke-width=".6"/><text x="4.6" y="7" font-size="6" font-weight="bold" fill="#222" font-family="Liberation Sans">2</text></svg>
<div class="a" style="left:23px;top:101.5px;width:12px;height:1px;background:#D6D2C2"></div>
<div class="a" style="left:35px;top:48px;width:556px;height:387px;background:#000"></div>
<div class="a" style="left:80px;top:48px;width:1px;height:387px;background:repeating-linear-gradient(#22437E 0,#22437E 5px,#000 5px,#000 6.5px,#22437E 6.5px,#22437E 7.5px,#000 7.5px,#000 9px)"></div>
<div class="a" style="left:35px;top:392px;width:556px;height:1px;background:repeating-linear-gradient(90deg,#22437E 0,#22437E 5px,#000 5px,#000 6.5px,#22437E 6.5px,#22437E 7.5px,#000 7.5px,#000 9px)"></div>
<div class="a" style="left:591px;top:48px;width:8px;height:387px;background:#F5F4EE"></div>
<div class="tb" style="left:591px;top:48px;width:8px;height:8px"></div>
<div class="a" style="left:593px;top:51px;border-left:2px solid transparent;border-right:2px solid transparent;border-bottom:2px solid #000"></div>
<div class="tb" style="left:591px;top:56px;width:8px;height:8px;background:#EDEBE0"></div>
<div class="tb" style="left:591px;top:427px;width:8px;height:8px"></div>
<div class="a" style="left:593px;top:430px;border-left:2px solid transparent;border-right:2px solid transparent;border-top:2px solid #000"></div>
<div class="a" style="left:35px;top:435px;width:556px;height:8px;background:#F5F4EE"></div>
<div class="tb" style="left:35px;top:435px;width:8px;height:8px"></div>
<div class="a" style="left:38px;top:437px;border-top:2px solid transparent;border-bottom:2px solid transparent;border-right:2px solid #000"></div>
<div class="tb" style="left:43px;top:435px;width:8px;height:8px;background:#EDEBE0"></div>
<div class="tb" style="left:583px;top:435px;width:8px;height:8px"></div>
<div class="a" style="left:586px;top:437px;border-top:2px solid transparent;border-bottom:2px solid transparent;border-left:2px solid #000"></div>
<div class="a" style="left:0;top:443px;width:600px;height:1px;background:#E6E3D3"></div>
<!-- Dialog -->
<div class="a" style="left:134px;top:150px;width:332px;height:166px;background:#ECE9D8;border-radius:5px 5px 0 0;border:1px solid #3A4E9A;border-top:none"></div>
<div class="a" style="left:135px;top:163px;width:330px;height:152px;border:2px solid #A3B4EC;border-top:none"></div>
<div class="a" style="left:134px;top:150px;width:332px;height:14px;border-radius:5px 5px 0 0;background:linear-gradient(#A6BEF3 0,#86A4E6 20%,#7896DF 55%,#7C9FE8 85%,#6E8ED8 100%)"></div>
<div class="a tt mono" style="left:137.5px;top:156px;font-weight:bold;font-size:6.2px;color:#EEF2FD">Advanced StyleMaker</div>
<div class="a" style="left:454px;top:154px;width:9px;height:9px;border-radius:1px;background:linear-gradient(135deg,#E2A9A8,#C98A8C);border:1px solid #EAD6DA"></div>
<svg class="a" style="left:454px;top:154px" width="9" height="9"><path d="M2.5 2.5L6.5 6.5M6.5 2.5L2.5 6.5" stroke="#fff" stroke-width="1.2"/></svg>

<div class="lbl" style="left:161px;top:166px">Menus</div>
<div class="fld" style="left:137px;top:173px;width:64px;height:116px;padding:0"></div>
<div class="a" style="left:138px;top:192px;width:62px;height:6px;background:#316AC5"></div>
<div class="a tt" style="left:138.5px;top:174.5px;height:6px;font-size:5.4px;letter-spacing:-0.2px;line-height:6px;color:#111">Board selection</div>
<div class="a tt" style="left:138.5px;top:180.5px;height:6px;font-size:5.6px;line-height:6px;color:#111">主体</div>
<div class="a tt" style="left:138.5px;top:186.5px;height:6px;font-size:5.6px;line-height:6px;color:#111">插舌</div>
<div class="a tt" style="left:138.5px;top:192.5px;height:6px;font-size:5.6px;line-height:6px;color:#fff">细节尺寸</div>
<div class="a tt" style="left:138.5px;top:198.5px;height:6px;font-size:5.6px;line-height:6px;color:#111">其他尺寸</div>

<div class="btn" style="left:201px;top:173px;width:9px;height:58px;box-shadow:none"></div>
<div class="btn" style="left:201px;top:231px;width:9px;height:58px;box-shadow:none"></div>
<div class="a" style="left:204px;top:201px;width:0;height:0;border-left:2px solid transparent;border-right:2px solid transparent;border-bottom:2px solid #000"></div>
<div class="a" style="left:204px;top:259px;width:0;height:0;border-left:2px solid transparent;border-right:2px solid transparent;border-top:2px solid #000"></div>

<div class="lbl" style="left:221px;top:166px">Variables</div>
<div class="fld" style="left:212px;top:173px;width:33px;height:116px;padding:0"></div>
<div class="a" style="left:213px;top:186.5px;width:31px;height:6px;background:#316AC5"></div>
<div class="a tt" style="left:213.5px;top:174.5px;height:6px;font-size:5.6px;line-height:6px;color:#111">A</div>
<div class="a tt" style="left:213.5px;top:180.5px;height:6px;font-size:5.6px;line-height:6px;color:#111">CW</div>
<div class="a tt" style="left:213.5px;top:186.5px;height:6px;font-size:5.6px;line-height:6px;color:#fff">CL</div>
<div class="btn" style="left:245px;top:173px;width:8px;height:58px;box-shadow:none"></div>
<div class="btn" style="left:245px;top:231px;width:8px;height:58px;box-shadow:none"></div>
<div class="a" style="left:247.5px;top:201px;width:0;height:0;border-left:2px solid transparent;border-right:2px solid transparent;border-bottom:2px solid #000"></div>
<div class="a" style="left:247.5px;top:259px;width:0;height:0;border-left:2px solid transparent;border-right:2px solid transparent;border-top:2px solid #000"></div>

<div class="grp" style="left:256px;top:169px;width:48px;height:42px"></div>
<div class="glab" style="left:258px;top:166px">Menu</div>
<div class="btn" style="left:259px;top:174px;width:41px;height:11px">Add</div>
<div class="btn" style="left:259px;top:186px;width:41px;height:11px">Rename</div>
<div class="btn" style="left:259px;top:199px;width:41px;height:11px">Delete</div>

<div class="grp" style="left:255px;top:219px;width:48px;height:70px"></div>
<div class="glab" style="left:257px;top:216px">Variables</div>
<div class="btn" style="left:259px;top:225px;width:41px;height:11px">Add</div>
<div class="btn" style="left:259px;top:238px;width:41px;height:11px">Add Text</div>
<div class="btn" style="left:259px;top:251px;width:41px;height:11px">Move</div>
<div class="btn" style="left:259px;top:264px;width:41px;height:11px">Delete</div>
<div class="btn" style="left:259px;top:277px;width:41px;height:11px">Copy</div>

<div class="btn" style="left:137px;top:295px;width:35px;height:11px">OK</div>
<div class="btn" style="left:176px;top:295px;width:35px;height:11px">Cancel</div>
<div class="btn" style="left:215px;top:295px;width:35px;height:11px">&lt;&lt; Simple</div>
<div class="btn" style="left:259px;top:295px;width:41px;height:11px">Diagram</div>

<div class="a" style="left:303px;top:166px;width:1px;height:123px;background:#D0CDBF"></div>
<div class="grp" style="left:306px;top:169px;width:156px;height:35px"></div>
<div class="glab" style="left:308px;top:166px">Variable Data</div>
<div class="lbl" style="left:308px;top:175px">Name:</div>
<div class="lbl" style="left:308px;top:185.5px">Description:</div>
<div class="lbl" style="left:308px;top:195px">Formula:</div>
<div class="fld" style="left:363px;top:172.5px;width:31px;height:9px;background:#ECE9D8;color:#B0AE9E;border-color:#C9C6B6">CL</div>
<svg class="a" style="left:420px;top:173px" width="7" height="7"><rect x="0.5" y="0.5" width="6" height="6" fill="#fff" stroke="#9A9A9A" stroke-width=".8"/><path d="M1.8 3.4 L3 4.8 L5.4 1.8" stroke="#000" stroke-width="1.1" fill="none"/></svg>
<div class="lbl" style="left:429px;top:172.5px">Visible</div>
<div class="fld" style="left:363px;top:183px;width:95px;height:9px"></div>
<div class="fld" style="left:363px;top:193.5px;width:83px;height:9px">DL-0.5W</div>

<div class="grp" style="left:306px;top:208px;width:156px;height:67px"></div>
<div class="glab" style="left:308px;top:205px">Check Data</div>
<div class="fld" style="left:363px;top:211px;width:80px;height:10px"></div>
<div class="fld" style="left:363px;top:222px;width:95px;height:10px"></div>
<div class="fld" style="left:363px;top:234px;width:80px;height:9px"></div>
<div class="fld" style="left:363px;top:244.5px;width:95px;height:10px"></div>
<div class="btn" style="left:446px;top:211px;width:13px;height:9px;font-weight:bold;font-style:italic;font-size:6.3px;line-height:7px;letter-spacing:-0.2px;color:#000;border:1px solid #505050;background:#CFCDC2;box-shadow:inset 1px 1px 0 #fff">f(x)</div>
<div class="btn" style="left:446px;top:234px;width:13px;height:9px;font-weight:bold;font-style:italic;font-size:6.3px;line-height:7px;letter-spacing:-0.2px;color:#000;border:1px solid #505050;background:#CFCDC2;box-shadow:inset 1px 1px 0 #fff">f(x)</div>
<div class="lbl" style="left:433.5px;top:257px">ts:</div>
<div class="fld" style="left:308px;top:264.5px;width:34px;height:9px">0.00</div>
<div class="a" style="left:341.5px;top:264.5px;width:8px;height:9px;background:#1D6F62;border:1px solid #777"></div>
<div class="fld" style="left:364.5px;top:264.5px;width:38px;height:9px;background:#ECE9D8;color:#B0AE9E;border-color:#C9C6B6">0.00</div>
<div class="fld" style="left:418px;top:264.5px;width:32px;height:9px">0</div>
<div class="a" style="left:451px;top:264.5px;width:8px;height:9px;background:#1D6F62;border:1px solid #777"></div>

<div class="lbl" style="left:321px;top:293px">No Diagram</div>
<div class="grp" style="left:362px;top:277.5px;width:55px;height:34px"></div>
<div class="glab" style="left:364px;top:275px">Type:</div>
<div class="a" style="left:365.5px;top:283.5px;width:5px;height:5px;border-radius:50%;background:#fff;border:1px solid #888"></div>
<div class="a" style="left:367.3px;top:285.3px;width:1.5px;height:1.5px;border-radius:50%;background:#000"></div>
<div class="lbl" style="left:373px;top:283.5px">Distance</div>
<div class="a" style="left:365.5px;top:293px;width:5px;height:5px;border-radius:50%;background:#fff;border:1px solid #888"></div>
<div class="lbl" style="left:373px;top:293px">Angle or Number</div>
<div class="a" style="left:365.5px;top:303px;width:5px;height:5px;border-radius:50%;background:#fff;border:1px solid #888"></div>
<div class="lbl" style="left:373px;top:303px">Angle/Offset</div>

<div class="grp" style="left:420.5px;top:278px;width:39px;height:33px"></div>
<div class="glab" style="left:422px;top:275px">Rounding:</div>
<div class="a" style="left:424px;top:285px;width:5px;height:5px;border-radius:50%;background:#fff;border:1px solid #888"></div>
<div class="a" style="left:425.8px;top:286.8px;width:1.5px;height:1.5px;border-radius:50%;background:#000"></div>
<div class="lbl" style="left:431px;top:285px">None</div>
<div class="a" style="left:424px;top:294px;width:5px;height:5px;border-radius:50%;background:#fff;border:1px solid #888"></div>
<div class="lbl" style="left:431px;top:294px">Up</div>
<div class="a" style="left:424px;top:303px;width:5px;height:5px;border-radius:50%;background:#fff;border:1px solid #888"></div>
<div class="lbl" style="left:431px;top:303px">Down</div>

<!-- Message box -->
<div class="a" style="left:290px;top:208px;width:143px;height:56px;background:#ECE9D8;border-radius:5px 5px 0 0;border:1.5px solid #1A3C9E;border-top:none;box-shadow:inset 1px -1px 0 #BFD0F2,inset -1px 0 0 #BFD0F2"></div>
<div class="a" style="left:290px;top:208px;width:143px;height:13px;border-radius:5px 5px 0 0;background:linear-gradient(#3F85F6 0,#1262EA 20%,#0A54E0 60%,#0B5CEB 85%,#0846C6 100%)"></div>
<div class="a tt mono" style="left:293px;top:213px;font-size:6px;font-weight:bold;color:#fff;letter-spacing:0.1px">Expression could not be evaluated</div>
<div class="a" style="left:421px;top:211px;width:10px;height:9px;border-radius:1px;background:linear-gradient(135deg,#E8806A,#D0502E);border:1px solid #F0E0DA"></div>
<svg class="a" style="left:421px;top:211px" width="10" height="9"><path d="M3 2.5L7 6.5M7 2.5L3 6.5" stroke="#fff" stroke-width="1.3"/></svg>
<svg class="a" style="left:295px;top:225px" width="17" height="17"><path d="M5 13 L4 16.5 L8.5 14 Z" fill="#8FB0DA"/><circle cx="8" cy="8" r="7" fill="#B9D2F0" stroke="#7E9FCC" stroke-width=".8"/><circle cx="7" cy="6" r="4.5" fill="#F4F8FE"/><circle cx="8" cy="4.2" r="1.1" fill="#1D3C9C"/><path d="M6.6 6.5h2.2v5.2h1v1h-3.6v-1h1v-4.2h-.6z" fill="#1D3C9C"/></svg>
<div class="a tt mono" style="left:320px;top:232px;font-size:4.9px;color:#111;letter-spacing:-0.05px">Invalid data</div>
<div class="a" style="left:345px;top:248px;width:34px;height:10px;border:1px solid #444;background:#ECE9D8;box-shadow:inset 1px 1px 0 #fff,inset -1px -1px 0 #999"></div>
<div class="a tt" style="left:356px;top:250px;font-size:6px;color:#111">确定</div>


<div class="a" style="left:0;top:456px;width:600px;height:1px;background:#D3CFBF"></div>
<div class="a" style="left:0;top:457px;width:600px;height:1px;background:#F2F0E6"></div>
<div class="a tt mono" style="left:1px;top:460.3px;font-size:4.7px;color:#111">For Help, press F1</div>
<div class="a" style="left:364px;top:458px;width:236px;height:8px;border-top:1px solid #CBC7B7;border-left:1px solid #CBC7B7"></div>
<div class="a" style="left:0;top:466px;width:600px;height:14px;background:linear-gradient(#5C9CF4 0,#3A78E8 12%,#2A64DE 30%,#245DDB 60%,#2259D8 85%,#1B47B0 100%)"></div>
<div class="a" style="left:0;top:466px;width:44px;height:14px;border-radius:0 7px 7px 0;background:linear-gradient(#62BC62 0,#46A848 20%,#42A444 70%,#358836 100%)"></div>
<svg class="a" style="left:5.5px;top:468.5px" width="10" height="10" viewBox="0 0 10 10"><rect x="1" y="1" width="3.5" height="3.5" fill="#F05030"/><rect x="5" y="1" width="3.5" height="3.5" fill="#60C030"/><rect x="1" y="5" width="3.5" height="3.5" fill="#3080F0"/><rect x="5" y="5" width="3.5" height="3.5" fill="#F0C020"/></svg>
<div class="a tt" style="left:19px;top:468.5px;font-size:7.5px;font-style:italic;color:#F0F8F0">开始</div>
<div class="a" style="left:51px;top:469px;width:8px;height:8px;border-radius:50%;background:#3A8AE8;border:1.5px solid #fff"></div>
<div class="a" style="left:63px;top:468.5px;width:5px;height:9px;background:linear-gradient(#E0F0FF,#70A0E0)"></div>
<div class="a" style="left:73px;top:469px;width:7px;height:7px;border-radius:2px;background:#A8C8F8;border:1px solid #fff"></div>
<div class="a" style="left:88px;top:467.5px;width:75px;height:12px;border-radius:2px;background:#1E4CC0;box-shadow:inset 1px 1px 1px #16378F"></div>
<div class="a" style="left:95px;top:470px;width:7px;height:7px;border-radius:50%;background:radial-gradient(#F8D080,#E09020)"></div>
<div class="a tt mono" style="left:104px;top:471px;font-size:5px;color:#E8EEFC">Esko ArtiosCAD - ...</div>
<div class="a" style="left:165px;top:467.5px;width:74px;height:12px;border-radius:2px;background:#3C81F2;box-shadow:inset 1px 1px 0 #5A9AF8"></div>
<div class="a" style="left:170px;top:469px;width:5px;height:9px;background:linear-gradient(#F0F8FF,#7AA8E8)"></div>
<div class="a tt" style="left:178px;top:470.5px;font-size:5.5px;color:#fff">我的电脑</div>
<div class="a" style="left:242px;top:467.5px;width:73px;height:12px;border-radius:2px;background:#3C81F2;box-shadow:inset 1px 1px 0 #5A9AF8"></div>
<div class="a" style="left:245px;top:469.5px;width:7px;height:7px;background:#1A2A60;border:.5px solid #8AB0F0"></div>
<div class="a tt" style="left:246px;top:470.5px;font-size:5px;color:#fff;font-weight:bold">Ps</div>
<div class="a tt mono" style="left:254px;top:471.5px;font-size:4.6px;color:#fff">Adobe Photoshop ...</div>
<div class="a" style="left:496px;top:471.5px;width:8px;height:5px;background:#DDE4F0;border:1px solid #4A5A8A;border-radius:1px"></div>
<div class="a" style="left:507px;top:470px;width:6px;height:7px;background:#F4F0D8;border:1px solid #707060"></div>
<div class="a" style="left:519px;top:469px;width:3px;height:3px;background:#C8DCF8;border-radius:1px"></div><div class="a" style="left:518.5px;top:475px;width:2px;height:2px;background:#C8DCF8"></div>
<div class="a" style="left:530px;top:466px;width:70px;height:14px;background:linear-gradient(#2F97F2 0,#1A8CEA 15%,#1683E6 80%,#1466C6 100%);border-left:1px solid #1A4AB0"></div>
<div class="a" style="left:535.5px;top:470.5px;width:6px;height:6px;border-radius:50%;background:#D02030"></div>
<div class="a" style="left:543px;top:469.5px;width:7px;height:7.5px;border-radius:50%;background:radial-gradient(circle at 60% 40%,#fff,#3A70D0)"></div>
<div class="a" style="left:553px;top:469.5px;width:6px;height:8px;border-radius:2px;background:radial-gradient(#F05050,#F0F0F0)"></div>
<div class="a" style="left:561px;top:469.5px;width:8px;height:8px;background:linear-gradient(135deg,#3050A0,#8AA8E8);border-radius:1px"></div>
<div class="a" style="left:571px;top:469.5px;width:7px;height:8px;border-radius:50%;background:radial-gradient(#F0E0A0,#506080)"></div>
<div class="a tt mono" style="left:581px;top:470.5px;font-size:5.3px;color:#fff">9:38</div>
</body></html>
